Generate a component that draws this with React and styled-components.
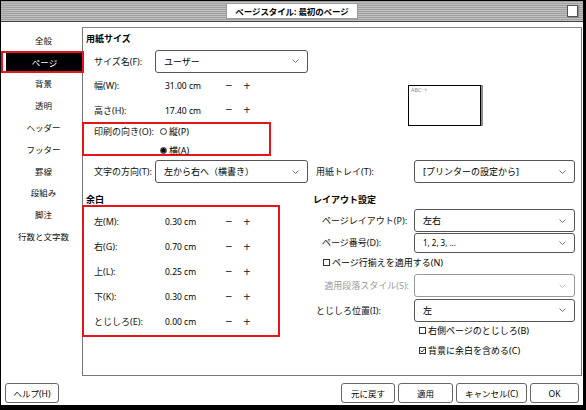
import React from 'react';
import styled, { createGlobalStyle } from 'styled-components';

const Global = createGlobalStyle`
  html, body { margin: 0; padding: 0; background: #fff; }
  * { box-sizing: border-box; }
`;

const FONT = `"Noto Sans", "Noto Sans CJK JP", sans-serif`;

const styles = {
  Window: styled.div`
    width: 586px;
    height: 410px;
    display: flex;
    flex-direction: column;
    background: #fff;
    border-style: solid;
    border-color: #000;
    border-width: 1px 3px 5px 1px;
    font-family: ${FONT};
    font-size: 9px;
    color: #000;
    overflow: hidden;
  `,
  TitleBar: styled.div`
    height: 21px;
    flex: none;
    display: flex;
    align-items: center;
    justify-content: center;
    position: relative;
    border-bottom: 1px solid #444;
    background: repeating-linear-gradient(180deg, #9f9f9f 0px, #9f9f9f 1px, #c0c0c0 1px, #c0c0c0 2px);
  `,
  TitleText: styled.div`
    width: 132px;
    height: 16px;
    background: #fff;
    border: 1px solid #9a9a9a;
    display: flex;
    align-items: center;
    justify-content: center;
    font-weight: 700;
    font-size: 8.5px;
    letter-spacing: -0.1px;
  `,
  CloseBox: styled.div`
    position: absolute;
    right: 5px;
    top: 4px;
    width: 11px;
    height: 12px;
    background: #fff;
    border: 1px solid #555;
    box-shadow: 1px 1px 0 #888;
  `,
  Body: styled.div`
    flex: none;
    display: flex;
  `,
  Sidebar: styled.div`
    width: 81px;
    flex: none;
    padding-top: 7px;
    display: flex;
    flex-direction: column;
  `,
  SideItem: styled.div`
    height: 21.8px;
    display: flex;
    align-items: center;
    justify-content: center;
    font-size: 8.5px;
    color: ${p => (p.$active ? '#fff' : '#111')};
    background: ${p => (p.$active ? '#000' : 'transparent')};
    border: ${p => (p.$active ? '2px solid #e8141b' : '2px solid transparent')};
    box-shadow: ${p => (p.$active ? 'inset 3px 0 0 #fff' : 'none')};
    margin-right: ${p => (p.$active ? '-2px' : '0')};
    position: relative;
    z-index: ${p => (p.$active ? 2 : 0)};
    padding-left: 4px;
  `,
  Panel: styled.div`
    flex: 1;
    margin: 5px 1px 0 0;
    height: 349px;
    border: 1px solid #777;
    border-top-color: #888;
    display: flex;
    flex-direction: column;
  `,
  TwoCols: styled.div`
    display: grid;
    grid-template-columns: 227px 1fr;
    margin-top: ${p => p.$mt || 0}px;
  `,
  Col: styled.div`
    display: flex;
    flex-direction: column;
  `,
  Heading: styled.div`
    height: ${p => p.$h || 12}px;
    display: flex;
    align-items: center;
    padding-left: 3px;
    font-weight: 700;
    font-size: 9px;
  `,
  Row: styled.div`
    height: ${p => p.$h}px;
    margin-top: ${p => p.$mt || 0}px;
    display: flex;
    align-items: center;
    padding-left: ${p => p.$pl ?? 11}px;
  `,
  Label: styled.div`
    width: ${p => p.$w || 61}px;
    flex: none;
    white-space: nowrap;
    color: ${p => (p.$disabled ? '#9a9a9a' : '#111')};
    text-align: ${p => (p.$right ? 'right' : 'left')};
    padding-right: ${p => (p.$right ? '5px' : '0')};
  `,
  Select: styled.div`
    width: ${p => p.$w}px;
    height: ${p => p.$h || 23}px;
    border: 1px solid ${p => (p.$disabled ? '#999' : '#555')};
    border-radius: 3px;
    background: #fff;
    display: flex;
    align-items: center;
    justify-content: space-between;
    padding: 0 8px 0 8px;
    font-size: ${p => p.$fs || 9}px;
    white-space: nowrap;
  `,
  Value: styled.div`
    width: 65px;
    flex: none;
    padding-left: 10px;
    font-size: 8.5px;
    white-space: nowrap;
  `,
  Spin: styled.div`
    width: 18px;
    flex: none;
    text-align: center;
    font-size: 12px;
    line-height: 12px;
    color: #333;
  `,
  RedBox: styled.div`
    border: 2px solid #e8141b;
    width: ${p => p.$w}px;
    height: ${p => p.$h}px;
    margin-top: ${p => p.$mt || 0}px;
    margin-left: -1px;
    padding-top: ${p => p.$pt || 0}px;
    display: flex;
    flex-direction: column;
    justify-content: ${p => (p.$spread ? 'space-between' : 'flex-start')};
  `,
  PreviewArea: styled.div`
    display: flex;
    align-items: center;
    justify-content: center;
    padding-top: 26px;
    padding-right: 2px;
  `,
  Preview: styled.div`
    width: 73px;
    height: 41px;
    border: 1px solid #000;
    box-shadow: 2px 0 0 #8e8e8e;
    font-size: 5.5px;
    color: #8a8a8a;
    padding: 1px 2px;
    line-height: 7px;
  `,
  Check: styled.span`
    width: 7px;
    height: 7px;
    border: 1px solid #333;
    display: inline-flex;
    align-items: center;
    justify-content: center;
    margin-right: 2px;
    flex: none;
  `,
  Radio: styled.span`
    width: 7px;
    height: 7px;
    border-radius: 50%;
    border: 1px solid #333;
    background: ${p => (p.$on ? 'radial-gradient(circle, #000 0 2px, #444 2px)' : '#fff')};
    display: inline-block;
    margin-right: 2px;
    flex: none;
  `,
  Option: styled.div`
    display: flex;
    align-items: center;
    white-space: nowrap;
  `,
  Footer: styled.div`
    flex: 1;
    display: flex;
    align-items: flex-start;
    justify-content: space-between;
    padding: 7px 4px 0 4px;
  `,
  BtnGroup: styled.div`
    display: flex;
    gap: 3px;
  `,
  Button: styled.div`
    width: ${p => p.$w}px;
    height: 20px;
    border: 1px solid #666;
    border-radius: 3px;
    background: #fff;
    display: flex;
    align-items: center;
    justify-content: center;
    font-size: 8.5px;
    white-space: nowrap;
  `,
};

const Chevron = ({ light }) => (
  <svg width="7" height="4" viewBox="0 0 7 4">
    <path d="M0.5 0.5 L3.5 3.5 L6.5 0.5" fill="none" stroke={light ? '#bbb' : '#666'} strokeWidth="0.9" />
  </svg>
);

const Dropdown = ({ w, h, fs, disabled, children }) => (
  <styles.Select $w={w} $h={h} $fs={fs} $disabled={disabled}>
    <span>{children}</span>
    <Chevron light={disabled} />
  </styles.Select>
);

const NumRow = ({ label, value, h, pl }) => (
  <styles.Row $h={h} $pl={pl}>
    <styles.Label>{label}</styles.Label>
    <styles.Value>{value}</styles.Value>
    <styles.Spin>−</styles.Spin>
    <styles.Spin>+</styles.Spin>
  </styles.Row>
);

const CheckBox = ({ checked, children }) => (
  <styles.Option>
    <styles.Check>
      {checked && (
        <svg width="5" height="5" viewBox="0 0 5 5">
          <path d="M0.5 2.6 L2 4 L4.6 0.8" fill="none" stroke="#222" strokeWidth="0.9" />
        </svg>
      )}
    </styles.Check>
    {children}
  </styles.Option>
);

const sideItems = ['全般', 'ページ', '背景', '透明', 'ヘッダー', 'フッター', '罫線', '段組み', '脚注', '行数と文字数'];

const margins = [
  ['左(M):', '0.30 cm'],
  ['右(G):', '0.70 cm'],
  ['上(L):', '0.25 cm'],
  ['下(K):', '0.30 cm'],
  ['とじしろ(E):', '0.00 cm'],
];

export default function App() {
  return (
    <>
      <Global />
      <styles.Window>
        <styles.TitleBar>
          <styles.TitleText>ページスタイル: 最初のページ</styles.TitleText>
          <styles.CloseBox />
        </styles.TitleBar>
        <styles.Body>
          <styles.Sidebar>
            {sideItems.map(s => (
              <styles.SideItem key={s} $active={s === 'ページ'}>{s}</styles.SideItem>
            ))}
          </styles.Sidebar>
          <styles.Panel>
            <styles.TwoCols>
              <styles.Col>
                <styles.Heading $h={21}>用紙サイズ</styles.Heading>
                <styles.Row $h={24}>
                  <styles.Label>サイズ名(F):</styles.Label>
                  <Dropdown w={153}>ユーザー</Dropdown>
                </styles.Row>
                <NumRow label="幅(W):" value="31.00 cm" h={25} pl={11} />
                <NumRow label="高さ(H):" value="17.40 cm" h={24} pl={11} />
                <styles.RedBox $w={189} $h={34} $pt={3} $spread>
                  <styles.Row $h={8} $pl={10}>
                    <styles.Label $w={66}>印刷の向き(O):</styles.Label>
                    <styles.Option><styles.Radio />縦(P)</styles.Option>
                  </styles.Row>
                  <styles.Row $h={8} $pl={76}>
                    <styles.Option><styles.Radio $on />横(A)</styles.Option>
                  </styles.Row>
                </styles.RedBox>
              </styles.Col>
              <styles.PreviewArea>
                <styles.Preview>ABC→</styles.Preview>
              </styles.PreviewArea>
            </styles.TwoCols>

            <styles.TwoCols $mt={4}>
              <styles.Row $h={23}>
                <styles.Label>文字の方向(T):</styles.Label>
                <Dropdown w={153}>左から右へ（横書き）</Dropdown>
              </styles.Row>
              <styles.Row $h={23} $pl={6}>
                <styles.Label $w={98}>用紙トレイ(T):</styles.Label>
                <Dropdown w={161}>[プリンターの設定から]</Dropdown>
              </styles.Row>
            </styles.TwoCols>

            <styles.TwoCols $mt={10}>
              <styles.Col>
                <styles.Heading>余白</styles.Heading>
                <styles.RedBox $w={198} $h={132} $pt={2}>
                  {margins.map(([l, v]) => (
                    <NumRow key={l} label={l} value={v} h={25} pl={10} />
                  ))}
                </styles.RedBox>
              </styles.Col>
              <styles.Col>
                <styles.Heading>レイアウト設定</styles.Heading>
                <styles.Row $h={23} $mt={4} $pl={12}>
                  <styles.Label $w={92}>ページレイアウト(P):</styles.Label>
                  <Dropdown w={161}>左右</Dropdown>
                </styles.Row>
                <styles.Row $h={21} $pl={12}>
                  <styles.Label $w={92}>ページ番号(D):</styles.Label>
                  <Dropdown w={161} h={20} fs={8}>1, 2, 3, ...</Dropdown>
                </styles.Row>
                <styles.Row $h={19} $pl={13}>
                  <CheckBox>ページ行揃えを適用する(N)</CheckBox>
                </styles.Row>
                <styles.Row $h={23} $mt={2} $pl={0}>
                  <styles.Label $w={104} $right $disabled>適用段落スタイル(S):</styles.Label>
                  <Dropdown w={161} disabled> </Dropdown>
                </styles.Row>
                <styles.Row $h={24} $mt={1} $pl={6}>
                  <styles.Label $w={98}>とじしろ位置(I):</styles.Label>
                  <Dropdown w={161}>左</Dropdown>
                </styles.Row>
                <styles.Row $h={16} $pl={109}>
                  <CheckBox>右側ページのとじしろ(B)</CheckBox>
                </styles.Row>
                <styles.Row $h={24} $pl={109}>
                  <CheckBox checked>背景に余白を含める(C)</CheckBox>
                </styles.Row>
              </styles.Col>
            </styles.TwoCols>
          </styles.Panel>
        </styles.Body>
        <styles.Footer>
          <styles.Button $w={54}>ヘルプ(H)</styles.Button>
          <styles.BtnGroup>
            <styles.Button $w={54}>元に戻す</styles.Button>
            <styles.Button $w={55}>適用</styles.Button>
            <styles.Button $w={71}>キャンセル(C)</styles.Button>
            <styles.Button $w={49}>OK</styles.Button>
          </styles.BtnGroup>
        </styles.Footer>
      </styles.Window>
    </>
  );
}
